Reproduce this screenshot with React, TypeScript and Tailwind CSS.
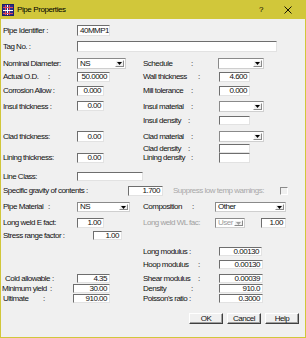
import React from "react";

function Tri({ gray }: { gray?: boolean }) {
  return (
    <svg width="5" height="3" viewBox="0 0 5 3">
      <path d="M0 0H5L2.5 3Z" fill={gray ? "#a0a0a0" : "#000"} />
    </svg>
  );
}

function Box({ cls, v, left }: { cls: string; v?: string; left?: boolean }) {
  return (
    <div
      className={`${cls} h-full shrink-0 bg-white border border-t-[#6e6e6e] border-l-[#6e6e6e] border-r-[#e2e2e2] border-b-[#e2e2e2] flex items-center overflow-hidden whitespace-nowrap ${
        left ? "justify-start pl-[2px]" : "justify-end pr-[2px]"
      }`}
    >
      {v}
    </div>
  );
}

function Sel({ cls, v, disabled }: { cls: string; v?: string; disabled?: boolean }) {
  return (
    <div
      className={`${cls} h-full shrink-0 bg-white border border-t-[#8a8a8a] border-l-[#8a8a8a] border-r-[#cfcfcf] border-b-[#cfcfcf] flex items-stretch`}
    >
      <div className={`flex-1 flex items-center pl-[2px] whitespace-nowrap ${disabled ? "text-[#9c9c9c]" : ""}`}>{v}</div>
      <div className="w-[9px] my-[1px] mr-[1px] bg-[#f0f0f0] border border-t-[#ffffff] border-l-[#ffffff] border-r-[#8a8a8a] border-b-[#8a8a8a] flex items-center justify-center">
        <Tri gray={disabled} />
      </div>
    </div>
  );
}

function L({ t, c, cls, gray }: { t: string; c?: string; cls: string; gray?: boolean }) {
  return (
    <div className={`${cls} shrink-0 flex items-center whitespace-nowrap ${gray ? "text-[#a0a0a0]" : ""}`}>
      {c ? (
        <>
          <span className={c}>{t}</span>
          <span>:</span>
        </>
      ) : (
        t
      )}
    </div>
  );
}

function Btn({ t }: { t: string }) {
  return (
    <div className="w-[34px] h-full bg-[#f0f0f0] border border-t-[#ffffff] border-l-[#ffffff] border-r-[#404040] border-b-[#404040] flex items-center justify-center shadow-[inset_-1px_-1px_0_#a0a0a0]">
      {t}
    </div>
  );
}

export default function App() {
  return (
    <div className="w-[306px] h-[338px] bg-[#d1c73a] flex flex-col font-['Liberation_Sans',Arial,sans-serif] text-[8px] leading-none tracking-[-0.5px] text-[#111]">
      {/* title bar */}
      <div className="h-[19px] flex items-center shrink-0">
        <svg width="12" height="12" viewBox="0 0 12 12" className="ml-[2px]">
          <rect x="0" y="0" width="12" height="12" fill="#1d1f6b" />
          <rect x="1" y="1" width="10" height="10" fill="#2a2f8a" />
          <rect x="3" y="1" width="1" height="10" fill="#e24a5a" />
          <rect x="7" y="1" width="1" height="10" fill="#e24a5a" />
          <rect x="1" y="6" width="10" height="1" fill="#ffffff" />
          <rect x="5" y="1" width="1" height="10" fill="#ffffff" />
          <rect x="1" y="3" width="10" height="1" fill="#e24a5a" />
          <rect x="1" y="9" width="10" height="1" fill="#e24a5a" />
        </svg>
        <span className="ml-[3px] text-[8px] tracking-[-0.4px] text-black">Pipe Properties</span>
        <div className="flex-1" />
        <span className="text-[8px] text-black mr-[21px]">?</span>
        <svg width="8" height="8" viewBox="0 0 8 8" className="mr-[14px]">
          <path d="M0.5 0.5L7.5 7.5M7.5 0.5L0.5 7.5" stroke="#000" strokeWidth="0.9" />
        </svg>
      </div>

      {/* body */}
      <div className="flex-1 mx-[1px] mb-[1px] bg-[#f0f0f0] flex flex-col">
        {/* R1 */}
        <div className="mt-[6px] h-[11px] flex pl-[2px]">
          <L t="Pipe Identifier :" cls="w-[74px]" />
          <Box cls="w-[33px]" v="40MMP1" left />
        </div>
        {/* R2 */}
        <div className="mt-[5px] h-[11px] flex pl-[2px]">
          <L t="Tag No. :" cls="w-[74px]" />
          <Box cls="w-[200px]" left />
        </div>
        {/* R3 */}
        <div className="mt-[6px] h-[11px] flex">
          <div className="w-[142px] flex pl-[2px]">
            <L t="Nominal Diameter:" cls="w-[74px]" />
            <Sel cls="w-[49px]" v="NS" />
          </div>
          <L t="Schedule" c="min-w-[48px]" cls="w-[75px]" />
          <Sel cls="w-[46px]" />
        </div>
        {/* R4 */}
        <div className="mt-[3px] h-[10px] flex">
          <div className="w-[142px] flex pl-[2px]">
            <L t="Actual O.D." c="min-w-[45px]" cls="w-[74px]" />
            <Box cls="w-[33px]" v="50.0000" />
          </div>
          <L t="Wall thickness" c="min-w-[55px]" cls="w-[76px]" />
          <Box cls="w-[31px]" v="4.600" />
        </div>
        {/* R5 */}
        <div className="mt-[4px] h-[10px] flex">
          <div className="w-[142px] flex pl-[2px]">
            <L t="Corrosion Allow :" cls="w-[74px]" />
            <Box cls="w-[27px]" v="0.000" />
          </div>
          <L t="Mill tolerance" c="min-w-[48px]" cls="w-[76px]" />
          <Box cls="w-[31px]" v="0.000" />
        </div>
        {/* R6 */}
        <div className="mt-[5px] h-[11px] flex">
          <div className="w-[142px] flex pl-[2px]">
            <L t="Insul thickness :" cls="w-[74px]" />
            <div className="h-[10px] flex">
              <Box cls="w-[27px]" v="0.00" />
            </div>
          </div>
          <L t="Insul material" c="min-w-[48px]" cls="w-[76px]" />
          <Sel cls="w-[45px]" />
        </div>
        {/* R7 */}
        <div className="mt-[4px] h-[9px] flex">
          <div className="w-[142px]" />
          <L t="Insul density" c="min-w-[45px]" cls="w-[76px]" />
          <Box cls="w-[31px]" />
        </div>
        {/* R8 */}
        <div className="mt-[6px] h-[11px] flex">
          <div className="w-[142px] flex pl-[2px]">
            <L t="Clad thickness" c="min-w-[45px]" cls="w-[74px]" />
            <Box cls="w-[27px]" v="0.00" />
          </div>
          <L t="Clad material" c="min-w-[48px]" cls="w-[76px]" />
          <Sel cls="w-[45px]" />
        </div>
        {/* R9 */}
        <div className="mt-[2px] h-[9px] flex">
          <div className="w-[142px]" />
          <L t="Clad density" c="min-w-[45px]" cls="w-[76px]" />
          <Box cls="w-[31px]" />
        </div>
        {/* R10 */}
        <div className="mt-[0px] h-[10px] flex">
          <div className="w-[142px] flex pl-[2px]">
            <L t="Lining thickness:" cls="w-[74px]" />
            <Box cls="w-[27px]" v="0.00" />
          </div>
          <L t="Lining density" c="min-w-[48px]" cls="w-[76px]" />
          <Box cls="w-[31px]" />
        </div>
        {/* R11 */}
        <div className="mt-[9px] h-[9px] flex pl-[2px]">
          <L t="Line Class" c="min-w-[32px]" cls="w-[74px]" />
          <Box cls="w-[66px]" left />
        </div>
        {/* R12 */}
        <div className="mt-[5px] h-[10px] flex pl-[2px] items-center">
          <L t="Specific gravity of contents :" cls="w-[125px] h-full" />
          <Box cls="w-[35px]" v="1.700" />
          <span className="ml-[10px] text-[#a8a8a8] whitespace-nowrap">Suppress low temp warnings:</span>
          <div className="flex-1" />
          <div className="w-[8px] h-[8px] mr-[17px] border border-t-[#8a8a8a] border-l-[#8a8a8a] border-r-[#ffffff] border-b-[#ffffff] bg-[#f0f0f0]" />
        </div>
        {/* R13 */}
        <div className="mt-[6px] h-[10px] flex">
          <div className="w-[142px] flex pl-[2px]">
            <L t="Pipe Material" c="min-w-[45px]" cls="w-[74px]" />
            <Sel cls="w-[53px]" v="NS" />
          </div>
          <L t="Composition" c="min-w-[49px]" cls="w-[72px]" />
          <Sel cls="w-[71px]" v="Other" />
        </div>
        {/* R14 */}
        <div className="mt-[6px] h-[10px] flex">
          <div className="w-[142px] flex pl-[2px]">
            <L t="Long weld E fact:" cls="w-[74px]" />
            <Box cls="w-[27px]" v="1.00" />
          </div>
          <L t="Long weld WL fac:" cls="w-[72px]" gray />
          <Sel cls="w-[30px]" v="User" disabled />
          <div className="w-[16px]" />
          <Box cls="w-[25px]" v="1.00" />
        </div>
        {/* R15 */}
        <div className="mt-[3px] h-[9px] flex pl-[2px]">
          <L t="Stress range factor :" cls="w-[90px]" />
          <Box cls="w-[29px]" v="1.00" />
        </div>
        {/* R16 */}
        <div className="mt-[7px] h-[9px] flex">
          <div className="w-[142px]" />
          <L t="Long modulus" c="min-w-[46px]" cls="w-[76px]" />
          <Box cls="w-[43px]" v="0.00130" />
        </div>
        {/* R17 */}
        <div className="mt-[4px] h-[9px] flex">
          <div className="w-[142px]" />
          <L t="Hoop modulus" c="min-w-[55px]" cls="w-[76px]" />
          <Box cls="w-[44px]" v="0.00130" />
        </div>
        {/* R18 */}
        <div className="mt-[5px] h-[9px] flex">
          <div className="w-[142px] flex pl-[2px]">
            <L t="Cold allowable" c="min-w-[47px]" cls="ml-[2px] w-[72px]" />
            <Box cls="w-[33px]" v="4.35" />
          </div>
          <L t="Shear modulus" c="min-w-[55px]" cls="w-[76px]" />
          <Box cls="w-[44px]" v="0.00039" />
        </div>
        {/* R19 */}
        <div className="mt-[1px] h-[9px] flex">
          <div className="w-[142px] flex pl-[2px]">
            <L t="Minimum yield" c="min-w-[48px]" cls="-ml-[1px] w-[71px]" />
            <Box cls="w-[37px]" v="30.00" />
          </div>
          <L t="Density" c="min-w-[48px]" cls="w-[76px]" />
          <Box cls="w-[44px]" v="910.0" />
        </div>
        {/* R20 */}
        <div className="mt-[1px] h-[9px] flex">
          <div className="w-[142px] flex pl-[2px]">
            <L t="Ultimate" c="min-w-[40px]" cls="w-[70px]" />
            <Box cls="w-[37px]" v="910.00" />
          </div>
          <L t="Poisson's ratio :" cls="w-[76px]" />
          <Box cls="w-[44px]" v="0.3000" />
        </div>
        {/* buttons */}
        <div className="mt-[10px] h-[11px] flex justify-end gap-[4px] pr-[6px]">
          <Btn t="OK" />
          <Btn t="Cancel" />
          <Btn t="Help" />
        </div>
      </div>
    </div>
  );
}
